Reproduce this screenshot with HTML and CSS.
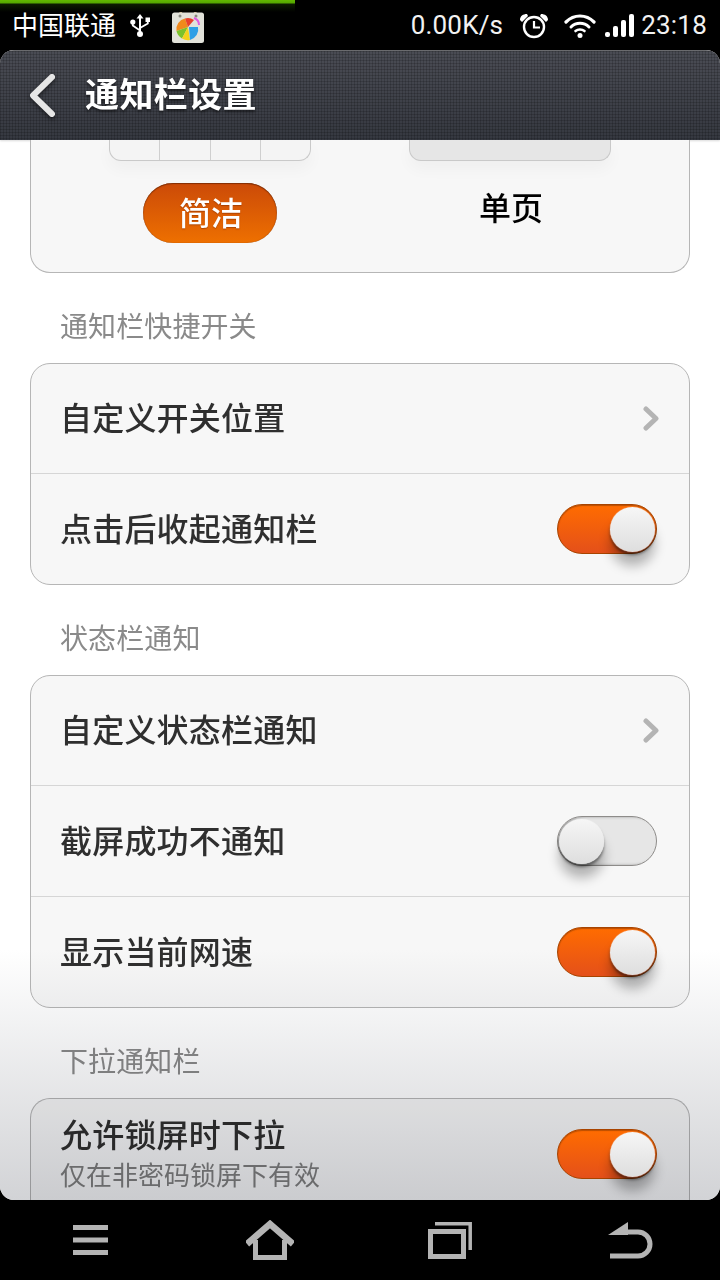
FILE: index.html
```html
<!DOCTYPE html>
<html lang="zh-CN">
<head>
<meta charset="utf-8">
<title>通知栏设置</title>
<link rel="stylesheet" href="styles.css">
</head>
<body>
<div class="progress"></div>
<header class="status">
  <span class="carrier">中国联通</span>
  <svg class="usb" viewBox="0 0 20 23" width="20" height="23"><g fill="#fff"><path d="M9 3h2v15H9z"/><path d="M10 0l3.500 4.500h-7z"/><circle cx="10" cy="20" r="3"/><circle cx="2.800" cy="8" r="2.600"/><rect x="15.500" y="3.500" width="4.500" height="4.500"/></g><path d="M2.800 9V11.500L10 16.500M17.800 7V9.500L10 14" fill="none" stroke="#fff" stroke-width="1.800"/></svg>
  <svg class="bag" viewBox="0 0 34 36" width="34" height="36">
    <path d="M9 9C9 -2 25 -2 25 9" fill="none" stroke="#c4a878" stroke-width="2.400"/>
    <rect x="1" y="5.500" width="32" height="30.500" rx="2.500" fill="#e2e2da"/>
    <circle cx="9" cy="9" r="1.500" fill="#8a8a80"/><circle cx="25" cy="9" r="1.500" fill="#8a8a80"/>
    <path d="M5.500 24A11 11 0 0 1 14 11.500L17 20Z" fill="#f08a1c"/>
    <path d="M14 11.500A11 11 0 0 1 23 13L17 20Z" fill="#e8402c"/>
    <path d="M5.500 24L17 20L11 31.500A11 11 0 0 1 5.500 24Z" fill="#7cc22a"/>
    <path d="M11 31.500L17 20L19 33A11 11 0 0 1 11 31.500Z" fill="#f4d21c"/>
    <path d="M19 33L18 20L27 20A11 11 0 0 1 19 33Z" fill="#2e9fe6"/>
    <path d="M23 11C26 12 28 15 28 18" fill="none" stroke="#e05ae0" stroke-width="2"/>
  </svg>
  <span class="spacer"></span>
  <span class="speed">0.00K/s</span>
  <svg class="alarm" viewBox="0 0 30 26" width="30" height="26"><g fill="none" stroke="#fff"><circle cx="15" cy="14" r="10" stroke-width="2.400"/><path d="M15 8v6.500h6" stroke-width="2.200"/></g><path d="M1 7C1 3 4 1 8 1L9 3L3 9ZM29 7C29 3 26 1 22 1L21 3L27 9Z" fill="#fff"/></svg>
  <svg class="wifi" viewBox="0 0 32 25" width="32" height="25"><g fill="none" stroke="#fff" stroke-linecap="round"><path d="M2 9C10 1 22 1 30 9" stroke-width="3.200"/><path d="M7 14C12 9 20 9 25 14" stroke-width="3"/><path d="M11.500 18C14 16 18 16 20.500 18" stroke-width="2.600"/></g><circle cx="16" cy="22.500" r="2.500" fill="#fff"/></svg>
  <svg class="signal" viewBox="0 0 29 23" width="29" height="23"><g fill="#fff"><rect x="0" y="18" width="5" height="5" rx="2"/><rect x="8" y="12" width="5" height="11" rx="2"/><rect x="16" y="6" width="5" height="17" rx="2"/><rect x="24" y="0" width="5" height="23" rx="2"/></g></svg>
  <span class="clock">23:18</span>
</header>

<div class="screen">
  <div class="titlebar">
    <svg class="back" viewBox="0 0 28 45" width="28" height="45"><path d="M24 4L5 22.500L24 41" fill="none" stroke="#e6e6e6" stroke-width="6" stroke-linecap="round" stroke-linejoin="round"/></svg>
    <h1 class="title">通知栏设置</h1>
  </div>

  <div class="content">
    <section class="card card-top">
      <div class="style-col">
        <div class="preview">
          <span class="cell"></span><span class="cell"></span><span class="cell"></span><span class="cell"></span>
        </div>
        <span class="style-btn active">简洁</span>
      </div>
      <div class="style-col">
        <div class="preview preview-solid"></div>
        <span class="style-btn">单页</span>
      </div>
    </section>

    <h2 class="section">通知栏快捷开关</h2>
    <section class="card">
      <div class="row"><span class="label">自定义开关位置</span>
        <svg class="chevron" viewBox="0 0 17 25" width="17" height="25"><path d="M3 3L13 12.500L3 22" fill="none" stroke="#b4b4b4" stroke-width="5" stroke-linecap="round" stroke-linejoin="round"/></svg></div>
      <div class="row"><span class="label">点击后收起通知栏</span><span class="toggle on"><span class="thumb"></span></span></div>
    </section>

    <h2 class="section">状态栏通知</h2>
    <section class="card">
      <div class="row"><span class="label">自定义状态栏通知</span>
        <svg class="chevron" viewBox="0 0 17 25" width="17" height="25"><path d="M3 3L13 12.500L3 22" fill="none" stroke="#b4b4b4" stroke-width="5" stroke-linecap="round" stroke-linejoin="round"/></svg></div>
      <div class="row"><span class="label">截屏成功不通知</span><span class="toggle"><span class="thumb"></span></span></div>
      <div class="row"><span class="label">显示当前网速</span><span class="toggle on"><span class="thumb"></span></span></div>
    </section>

    <h2 class="section">下拉通知栏</h2>
    <section class="card card-open">
      <div class="row">
        <div class="stack"><span class="label">允许锁屏时下拉</span><span class="sub">仅在非密码锁屏下有效</span></div>
        <span class="toggle on"><span class="thumb"></span></span>
      </div>
    </section>
  </div>
</div>

<nav class="navbar">
  <span class="nav-cell"><svg viewBox="0 0 35 30" width="35" height="30"><g fill="#b4b4b4"><rect width="35" height="5"/><rect y="12.500" width="35" height="5"/><rect y="25" width="35" height="5"/></g></svg></span>
  <span class="nav-cell"><svg viewBox="0 0 48 40" width="48" height="40"><path d="M1 24L24 4L47 24" fill="none" stroke="#b4b4b4" stroke-width="6.500"/><path d="M9.500 20V37.500H38.500V20" fill="none" stroke="#b4b4b4" stroke-width="5"/></svg></span>
  <span class="nav-cell"><svg viewBox="0 0 44 37" width="44" height="37"><path d="M7 1.800H42.200V28" fill="none" stroke="#b4b4b4" stroke-width="3.500"/><rect x="2.500" y="9.500" width="33" height="25" fill="none" stroke="#b4b4b4" stroke-width="5"/></svg></span>
  <span class="nav-cell"><svg viewBox="0 0 46 37" width="46" height="37"><path d="M1 13L21 0V13Z" fill="#b4b4b4"/><path d="M18 10H31A12 12 0 0 1 31 34H3" fill="none" stroke="#b4b4b4" stroke-width="5"/></svg></span>
</nav>
</body>
</html>
```
FILE: styles.css
```css
* { box-sizing: border-box; }
html, body { margin: 0; padding: 0; }
body {
  width: 720px;
  height: 1280px;
  overflow: hidden;
  background: #000;
  position: relative;
  font-family: "Noto Sans CJK SC", "Noto Sans", sans-serif;
}
.progress {
  position: absolute;
  left: 0;
  top: 0;
  width: 295px;
  height: 12px;
  background: linear-gradient(#62b800 0, #55a800 3px, #0c1c00 4px, #000 12px);
}
.status {
  height: 50px;
  display: flex;
  align-items: center;
  padding: 0 13px 0 12px;
  color: #fff;
}
.carrier { flex: none; font-size: 26px; line-height: 50px; width: 105px; white-space: nowrap; margin-top: -2px; }
.usb { flex: none; margin: 0 0 0 13px; }
.bag { flex: none; margin: 0 0 0 21px; }
.spacer { flex: 1; }
.speed, .clock { font-family: Roboto, sans-serif; font-size: 26px; line-height: 50px; letter-spacing: 0.2px; color: #f2f2f2; }
.alarm { margin: 2px 0 0 16px; }
.wifi { margin-left: 15px; }
.signal { margin-left: 9px; }
.clock { margin-left: 7px; }

.screen {
  position: relative;
  isolation: isolate;
  width: 720px;
  height: 1150px;
  border-radius: 14px;
  overflow: hidden;
  background: #fff;
  display: flex;
  flex-direction: column;
}
.screen::after {
  content: "";
  position: absolute;
  left: 0;
  right: 0;
  bottom: 0;
  height: 250px;
  background: linear-gradient(#fff, #d2d3d6);
  mix-blend-mode: multiply;
  z-index: 1;
  pointer-events: none;
}
.titlebar {
  flex: none;
  height: 90px;
  display: flex;
  align-items: center;
  padding-left: 28px;
  border-top: 1px solid #6a6b6e;
  background:
    linear-gradient(90deg, rgba(0,0,0,.16) 1px, transparent 1px) 0 0 / 3px 3px,
    linear-gradient(rgba(0,0,0,.16) 1px, transparent 1px) 0 0 / 3px 3px,
    linear-gradient(#4a4c54, #353840);
  box-shadow: 0 1px 2px rgba(0,0,0,.15);
}
.back { filter: drop-shadow(0 2px 2px rgba(0,0,0,.5)); }
.title {
  margin: 0 0 0 29px;
  padding-bottom: 6px;
  font-size: 34px;
  font-weight: 700;
  line-height: 80px;
  letter-spacing: 0.4px;
  color: #fff;
  text-shadow: 0 2px 3px rgba(0,0,0,.55);
}
.content { flex: 1; min-height: 0; overflow: hidden; padding: 0 30px; }
.card {
  background: #f7f7f7;
  border: 1px solid #b6b6b6;
  border-radius: 20px;
}
.card-open { border-bottom: 0; border-radius: 20px 20px 0 0; }
.card-open .row { height: 108px; padding-bottom: 1px; }
.card-top {
  border-top: 0;
  border-radius: 0 0 20px 20px;
  height: 133px;
  padding: 0 29px;
  display: grid;
  grid-template-columns: 300px 300px;
}
.style-col { display: flex; flex-direction: column; align-items: center; }
.preview {
  width: 202px;
  height: 21px;
  display: flex;
  border: 1px solid #c9c9c9;
  border-top: 0;
  border-radius: 0 0 12px 12px;
  background: #f4f4f4;
  box-shadow: 0 8px 16px rgba(0,0,0,.035);
}
.preview-solid { background: #e6e6e6; }
.cell { flex: 1; border-right: 1px solid #cfcfcf; }
.cell:last-child { border-right: 0; }
.style-btn {
  margin-top: 22px;
  width: 134px;
  height: 60px;
  display: flex;
  align-items: center;
  justify-content: center;
  font-size: 32px;
  font-weight: 500;
  line-height: 50px;
  color: #000;
  padding: 0 0 14px 2px;
}
.style-btn.active {
  padding: 0 0 4px 2px;
  color: #fff;
  border-radius: 30px;
  background: linear-gradient(#cb4a08, #ee7000);
  box-shadow: inset 0 1px 1px rgba(90,30,0,.6), inset 0 0 1px rgba(90,30,0,.7);
  text-shadow: 0 1px 1px rgba(120,40,0,.5);
}
.section {
  margin: 0;
  height: 90px;
  padding: 33px 0 0 30px;
  font-size: 28px;
  font-weight: 400;
  line-height: 38px;
  letter-spacing: 0.1px;
  color: #8a8a8a;
}
.row {
  height: 110px;
  display: flex;
  align-items: center;
  justify-content: space-between;
  padding: 0 32px 0 29px;
  border-top: 1px solid #d6d6d6;
  box-sizing: content-box;
}
.row:first-child { border-top: 0; height: 109px; }
.label { font-size: 32px; font-weight: 500; line-height: 44px; letter-spacing: 0.2px; color: #2f2f2f; padding-bottom: 5px; }
.stack { display: flex; flex-direction: column; padding-bottom: 5px; }
.sub { font-size: 26px; line-height: 34px; color: #7f7f7f; margin-top: -3px; }
.chevron { margin: -1px -3px 0 0; }
.toggle {
  position: relative;
  z-index: 2;
  flex: none;
  width: 100px;
  height: 50px;
  border-radius: 25px;
  background: #e6e6e6;
  border: 1px solid #8e8c8a;
  box-shadow: inset 3px 0 3px rgba(0,0,0,.3);
}
.toggle.on {
  border: 1px solid #a84400;
  background: linear-gradient(#ff6c00, #e4501a);
  box-shadow: inset 0 1px 1px rgba(120,50,0,.5);
}
.thumb {
  position: absolute;
  left: 1px;
  top: 2px;
  width: 45px;
  height: 45px;
  border-radius: 50%;
  background: linear-gradient(#f6f6f6, #dedede);
  box-shadow: 0 0 1px #fff, 0 3px 3px rgba(0,0,0,.45), 0 14px 12px rgba(0,0,0,.28);
}
.toggle.on .thumb { left: 52px; }
.navbar {
  height: 80px;
  display: grid;
  grid-template-columns: repeat(4, 180px);
  background: #000;
}
.nav-cell { display: flex; align-items: center; justify-content: center; }
```
